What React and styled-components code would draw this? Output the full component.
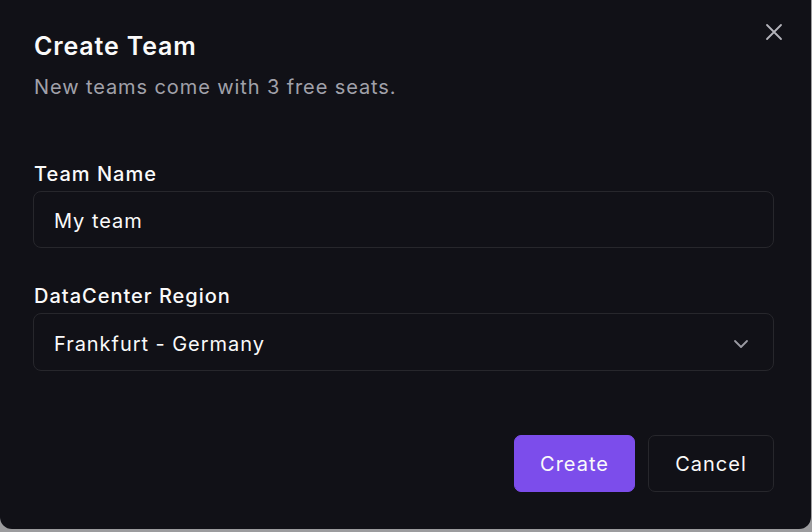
import React from "react";
import styled, { createGlobalStyle } from "styled-components";

const Global = createGlobalStyle`
  html, body {
    margin: 0;
    padding: 0;
    background: #9c9c9e;
    font-family: Inter, "Noto Sans", sans-serif;
    -webkit-font-smoothing: antialiased;
  }
`;

const Dialog = styled.div`
  position: relative;
  box-sizing: border-box;
  width: 811px;
  height: 529px;
  background: #111117;
  border-radius: 0 0 12px 12px;
  padding: 30px 37px 37px 33px;
  display: flex;
  flex-direction: column;
  color: #fafafa;
`;

const Close = styled.button`
  position: absolute;
  top: 22px;
  right: 27px;
  width: 20px;
  height: 20px;
  padding: 0;
  border: none;
  background: none;
  color: #b4b4bb;
  display: flex;
  align-items: center;
  justify-content: center;
`;

const Header = styled.div`
  display: flex;
  flex-direction: column;
  gap: 11px;
  padding-left: 1px;
`;

const Title = styled.h2`
  margin: 0;
  font-size: 25px;
  line-height: 32px;
  font-weight: 600;
  letter-spacing: 0.85px;
  color: #fafafa;
`;

const Subtitle = styled.p`
  margin: 0;
  font-size: 20px;
  line-height: 28px;
  letter-spacing: 0.9px;
  color: #a1a1aa;
`;

const Form = styled.div`
  display: flex;
  flex-direction: column;
  gap: 38px;
  margin-top: 63px;
`;

const Field = styled.div`
  display: flex;
  flex-direction: column;
  gap: 7px;
`;

const Label = styled.label`
  font-size: 20px;
  line-height: 20px;
  font-weight: 500;
  letter-spacing: 1px;
  padding-left: 1px;
  color: #fafafa;
`;

const Box = styled.div`
  box-sizing: border-box;
  height: ${(p) => p.$h}px;
  border: 1px solid #27272c;
  border-radius: 8px;
  display: flex;
  align-items: center;
  justify-content: space-between;
  padding: 3px 24px 0 20px;
  font-size: 20px;
  letter-spacing: 0.95px;
  color: #fafafa;
`;

const Footer = styled.div`
  margin-top: auto;
  display: flex;
  justify-content: flex-end;
  gap: 13px;
`;

const Button = styled.button`
  box-sizing: border-box;
  height: 57px;
  width: ${(p) => p.$w}px;
  border-radius: 7px;
  font-family: inherit;
  font-size: 20px;
  font-weight: 400;
  letter-spacing: 1px;
  color: #fafafa;
  background: ${(p) => (p.$primary ? "#7c4deb" : "#111117")};
  border: 1px solid ${(p) => (p.$primary ? "#7c4deb" : "#27272c")};
`;

export default function App() {
  return (
    <>
      <Global />
      <Dialog>
        <Close>
          <svg width="18" height="18" viewBox="0 0 18 18" fill="none" stroke="currentColor" strokeWidth="1.8" strokeLinecap="round">
            <path d="M2 2 L16 16 M16 2 L2 16" />
          </svg>
        </Close>
        <Header>
          <Title>Create Team</Title>
          <Subtitle>New teams come with 3 free seats.</Subtitle>
        </Header>
        <Form>
          <Field>
            <Label>Team Name</Label>
            <Box $h={57}>My team</Box>
          </Field>
          <Field>
            <Label>DataCenter Region</Label>
            <Box $h={58}>
              Frankfurt - Germany
              <svg width="16" height="10" viewBox="0 0 16 10" fill="none" stroke="#9a9aa2" strokeWidth="1.8" strokeLinecap="round" strokeLinejoin="round">
                <path d="M2 2 L8 8 L14 2" />
              </svg>
            </Box>
          </Field>
        </Form>
        <Footer>
          <Button $primary $w={121}>Create</Button>
          <Button $w={126}>Cancel</Button>
        </Footer>
      </Dialog>
    </>
  );
}
